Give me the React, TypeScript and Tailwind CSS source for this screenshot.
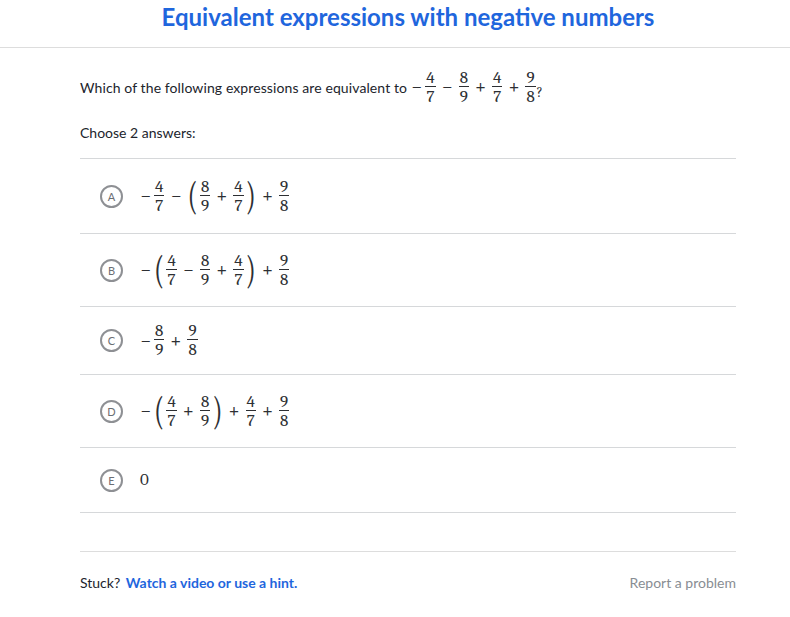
import React from 'react';

const math = 'font-serif text-[17px] text-[#2d2f33]';

function Frac({ n, d }: { n: string; d: string }) {
  return (
    <span className="mx-[1px] inline-flex flex-col items-center align-middle">
      <span className="px-[1px] leading-[17px]">{n}</span>
      <span className="h-px w-full bg-[#2d2f33]" />
      <span className="px-[1px] leading-[19px]">{d}</span>
    </span>
  );
}

function Op({ c }: { c: string }) {
  return <span className="mx-[5px] text-[20px] font-light leading-none">{c}</span>;
}

function Neg() {
  return <span className="mr-[2px] text-[20px] font-light leading-none">−</span>;
}

function Paren({ c }: { c: string }) {
  return (
    <span className="mx-[1px] inline-block scale-y-[1.5] text-[27px] font-light leading-none text-[#2d2f33]">
      {c}
    </span>
  );
}

function Choice({ letter, h, children }: { letter: string; h: string; children: React.ReactNode }) {
  return (
    <div className={`flex items-center border-t border-[#d6d8da] ${h}`}>
      <span className="ml-[20px] grid h-[23px] w-[23px] shrink-0 place-items-center rounded-full border-2 border-[#8e9094] font-[family-name:Lato,sans-serif] text-[11px] leading-none text-[#6b6e73]">
        {letter}
      </span>
      <div className={`ml-[17px] flex items-center ${math}`}>{children}</div>
    </div>
  );
}

export default function App() {
  return (
    <div className="h-[617px] w-[790px] bg-white font-[family-name:Lato,sans-serif] text-[#21242c]">
      <header className="h-[48px] border-b border-[#dddddd]">
        <h1 className="ml-[80px] w-[656px] text-center text-[24px] font-bold leading-[34px] text-[#1f66dd]">
          Equivalent expressions with negative numbers
        </h1>
      </header>

      <main className="ml-[80px] w-[656px]">
        <div className="mt-[18px] flex h-[42px] items-center text-[14px]">
          <span className="tracking-[0.1px]">Which of the following expressions are equivalent to</span>
          <span className={`ml-[4px] flex items-center ${math}`}>
            <Neg />
            <Frac n="4" d="7" />
            <Op c="−" />
            <Frac n="8" d="9" />
            <Op c="+" />
            <Frac n="4" d="7" />
            <Op c="+" />
            <Frac n="9" d="8" />
            <span className="mt-[10px] text-[14px]">?</span>
          </span>
        </div>

        <p className="mt-[15px] text-[14px] leading-[20px]">Choose 2 answers:</p>

        <div className="mt-[15px] border-b border-[#d6d8da]">
          <Choice letter="A" h="h-[75px]">
            <Neg />
            <Frac n="4" d="7" />
            <Op c="−" />
            <Paren c="(" />
            <Frac n="8" d="9" />
            <Op c="+" />
            <Frac n="4" d="7" />
            <Paren c=")" />
            <Op c="+" />
            <Frac n="9" d="8" />
          </Choice>
          <Choice letter="B" h="h-[73px]">
            <Neg />
            <Paren c="(" />
            <Frac n="4" d="7" />
            <Op c="−" />
            <Frac n="8" d="9" />
            <Op c="+" />
            <Frac n="4" d="7" />
            <Paren c=")" />
            <Op c="+" />
            <Frac n="9" d="8" />
          </Choice>
          <Choice letter="C" h="h-[68px]">
            <Neg />
            <Frac n="8" d="9" />
            <Op c="+" />
            <Frac n="9" d="8" />
          </Choice>
          <Choice letter="D" h="h-[73px]">
            <Neg />
            <Paren c="(" />
            <Frac n="4" d="7" />
            <Op c="+" />
            <Frac n="8" d="9" />
            <Paren c=")" />
            <Op c="+" />
            <Frac n="4" d="7" />
            <Op c="+" />
            <Frac n="9" d="8" />
          </Choice>
          <Choice letter="E" h="h-[65px]">
            <span>0</span>
          </Choice>
        </div>

        <div className="mt-[38px] border-t border-[#dddddd]">
          <div className="flex h-[60px] items-center justify-between text-[14px]">
            <p>
              Stuck?{' '}
              <span className="ml-[2px] font-bold text-[#1f66dd]">Watch a video or use a hint.</span>
            </p>
            <span className="text-[#888d93]">Report a problem</span>
          </div>
        </div>
      </main>
    </div>
  );
}
